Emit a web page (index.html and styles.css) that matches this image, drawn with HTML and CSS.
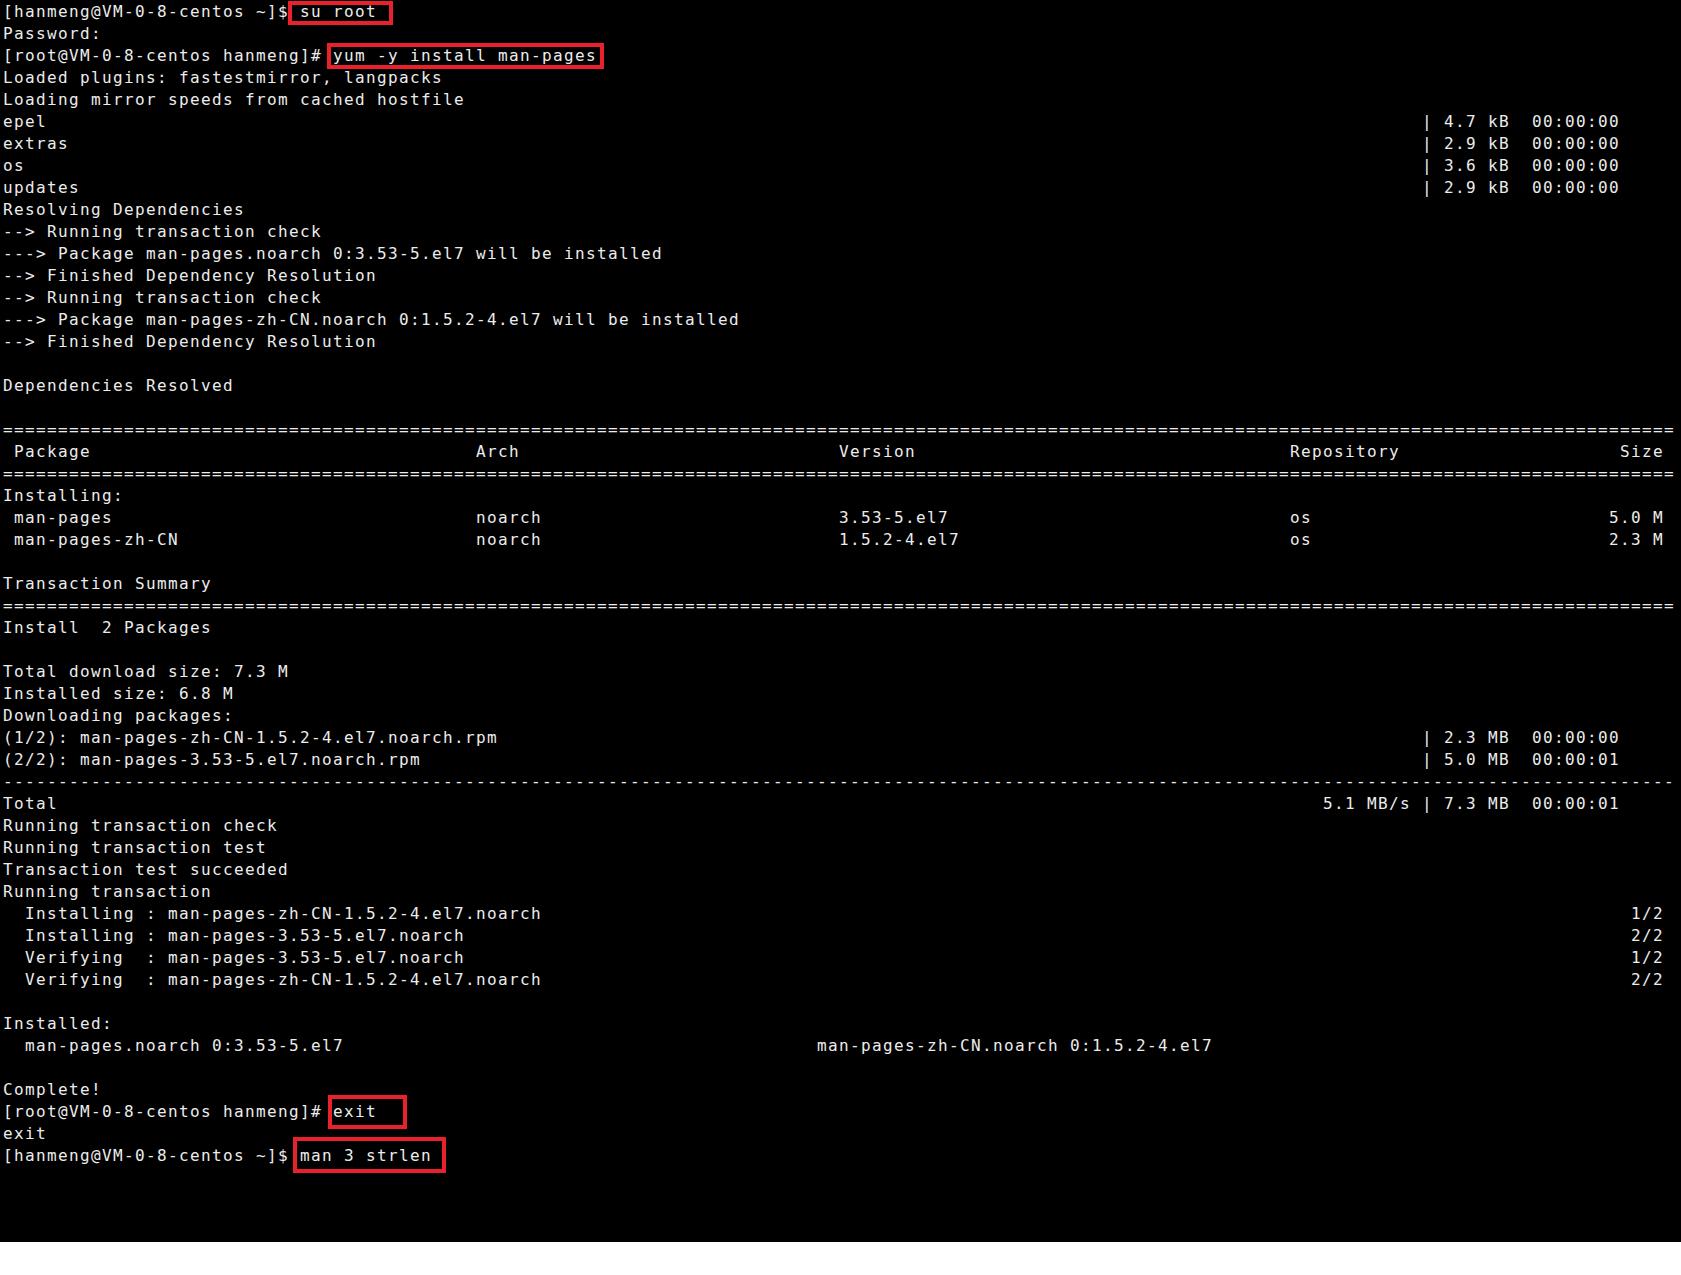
FILE: index.html
```html
<!DOCTYPE html>
<html lang="en">
<head>
<meta charset="utf-8">
<title>Terminal</title>
<link rel="stylesheet" href="styles.css">
</head>
<body>
<div class="term">
  <div class="ln">[hanmeng@VM-0-8-centos ~]$ su root</div>
  <div class="ln">Password:</div>
  <div class="ln">[root@VM-0-8-centos hanmeng]# yum -y install man-pages</div>
  <div class="ln">Loaded plugins: fastestmirror, langpacks</div>
  <div class="ln">Loading mirror speeds from cached hostfile</div>
  <div class="ln"><span class="c129">epel</span><span>| 4.7 kB  00:00:00</span></div>
  <div class="ln"><span class="c129">extras</span><span>| 2.9 kB  00:00:00</span></div>
  <div class="ln"><span class="c129">os</span><span>| 3.6 kB  00:00:00</span></div>
  <div class="ln"><span class="c129">updates</span><span>| 2.9 kB  00:00:00</span></div>
  <div class="ln">Resolving Dependencies</div>
  <div class="ln">--&gt; Running transaction check</div>
  <div class="ln">---&gt; Package man-pages.noarch 0:3.53-5.el7 will be installed</div>
  <div class="ln">--&gt; Finished Dependency Resolution</div>
  <div class="ln">--&gt; Running transaction check</div>
  <div class="ln">---&gt; Package man-pages-zh-CN.noarch 0:1.5.2-4.el7 will be installed</div>
  <div class="ln">--&gt; Finished Dependency Resolution</div>
  <div class="ln"></div>
  <div class="ln">Dependencies Resolved</div>
  <div class="ln"></div>
  <div class="ln rule-eq"></div>
  <div class="ln"><span class="t-pkg"> Package</span><span class="t-arch">Arch</span><span class="t-ver">Version</span><span class="t-repo">Repository</span><span class="t-size">Size</span></div>
  <div class="ln rule-eq"></div>
  <div class="ln">Installing:</div>
  <div class="ln"><span class="t-pkg"> man-pages</span><span class="t-arch">noarch</span><span class="t-ver">3.53-5.el7</span><span class="t-repo">os</span><span class="t-size">5.0 M</span></div>
  <div class="ln"><span class="t-pkg"> man-pages-zh-CN</span><span class="t-arch">noarch</span><span class="t-ver">1.5.2-4.el7</span><span class="t-repo">os</span><span class="t-size">2.3 M</span></div>
  <div class="ln"></div>
  <div class="ln">Transaction Summary</div>
  <div class="ln rule-eq"></div>
  <div class="ln">Install  2 Packages</div>
  <div class="ln"></div>
  <div class="ln">Total download size: 7.3 M</div>
  <div class="ln">Installed size: 6.8 M</div>
  <div class="ln">Downloading packages:</div>
  <div class="ln"><span class="c129">(1/2): man-pages-zh-CN-1.5.2-4.el7.noarch.rpm</span><span>| 2.3 MB  00:00:00</span></div>
  <div class="ln"><span class="c129">(2/2): man-pages-3.53-5.el7.noarch.rpm</span><span>| 5.0 MB  00:00:01</span></div>
  <div class="ln rule-dash"></div>
  <div class="ln"><span class="c120">Total</span><span>5.1 MB/s | 7.3 MB  00:00:01</span></div>
  <div class="ln">Running transaction check</div>
  <div class="ln">Running transaction test</div>
  <div class="ln">Transaction test succeeded</div>
  <div class="ln">Running transaction</div>
  <div class="ln"><span class="c148">  Installing : man-pages-zh-CN-1.5.2-4.el7.noarch</span><span>1/2</span></div>
  <div class="ln"><span class="c148">  Installing : man-pages-3.53-5.el7.noarch</span><span>2/2</span></div>
  <div class="ln"><span class="c148">  Verifying  : man-pages-3.53-5.el7.noarch</span><span>1/2</span></div>
  <div class="ln"><span class="c148">  Verifying  : man-pages-zh-CN-1.5.2-4.el7.noarch</span><span>2/2</span></div>
  <div class="ln"></div>
  <div class="ln">Installed:</div>
  <div class="ln"><span class="c74">  man-pages.noarch 0:3.53-5.el7</span><span>man-pages-zh-CN.noarch 0:1.5.2-4.el7</span></div>
  <div class="ln"></div>
  <div class="ln">Complete!</div>
  <div class="ln">[root@VM-0-8-centos hanmeng]# exit</div>
  <div class="ln">exit</div>
  <div class="ln">[hanmeng@VM-0-8-centos ~]$ man 3 strlen</div>

  <div class="mark mark-su"></div>
  <div class="mark mark-yum"></div>
  <div class="mark mark-exit"></div>
  <div class="mark mark-man"></div>
</div>
</body>
</html>
```
FILE: styles.css
```css
html, body {
  margin: 0;
  padding: 0;
  background: #ffffff;
}

.term {
  position: relative;
  box-sizing: border-box;
  width: 1681px;
  height: 1242px;
  padding: 1px 0 0 3px;
  background: #000000;
  color: #ececec;
  font-family: "DejaVu Sans Mono", monospace;
  font-size: 16px;
  letter-spacing: 1.3672px;
  overflow: hidden;
}

.ln {
  display: flex;
  height: 22px;
  line-height: 22px;
  white-space: pre;
}

.ln > span {
  flex: none;
  overflow: hidden;
}

.c74 { width: 814px; }
.c120 { width: 1320px; }
.c129 { width: 1419px; }
.c148 { width: 1628px; }

.t-pkg { width: 473px; }
.t-arch { width: 363px; }
.t-ver { width: 451px; }
.t-repo { width: 319px; }
.t-size { width: 55px; text-align: right; }

.rule-eq::before {
  content: "========================================================================================================================================================";
}

.rule-dash::before {
  content: "--------------------------------------------------------------------------------------------------------------------------------------------------------";
}

.mark {
  position: absolute;
  box-sizing: border-box;
  border: 4px solid #e8212b;
}

.mark-su { left: 288px; top: 1px; width: 105px; height: 24px; }
.mark-yum { left: 327px; top: 43px; width: 277px; height: 26px; }
.mark-exit { left: 328px; top: 1095px; width: 79px; height: 34px; }
.mark-man { left: 293px; top: 1137px; width: 153px; height: 36px; }
```
